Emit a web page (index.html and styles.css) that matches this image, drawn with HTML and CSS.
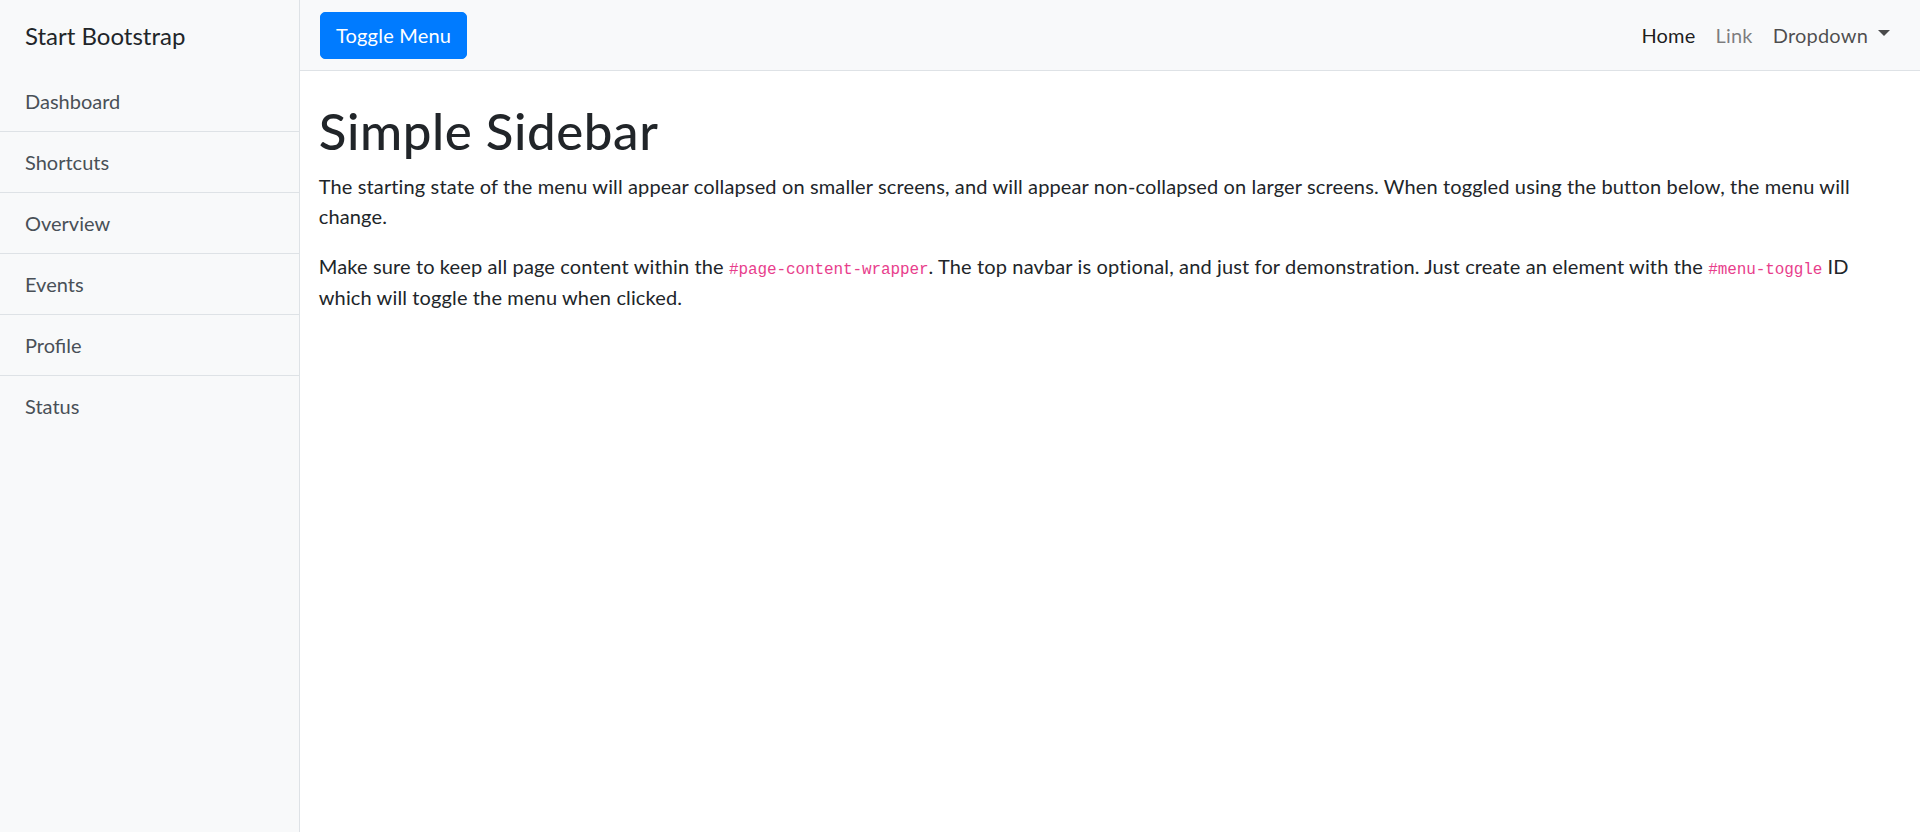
FILE: index.html
```html
<!DOCTYPE html>
<html lang="en">
<head>
<meta charset="utf-8">
<title>Simple Sidebar</title>
<link rel="stylesheet" href="styles.css">
</head>
<body>
<div class="wrapper">
  <aside class="sidebar">
    <div class="sidebar-heading">Start Bootstrap</div>
    <nav class="list-group">
      <a href="#" class="list-item">Dashboard</a>
      <a href="#" class="list-item">Shortcuts</a>
      <a href="#" class="list-item">Overview</a>
      <a href="#" class="list-item">Events</a>
      <a href="#" class="list-item">Profile</a>
      <a href="#" class="list-item last">Status</a>
    </nav>
  </aside>
  <div class="page">
    <header class="navbar">
      <button class="btn-toggle" type="button">Toggle Menu</button>
      <ul class="nav">
        <li><a href="#" class="nav-link active">Home</a></li>
        <li><a href="#" class="nav-link muted">Link</a></li>
        <li><a href="#" class="nav-link dropdown">Dropdown<span class="caret"></span></a></li>
      </ul>
    </header>
    <main class="content">
      <h1 class="title">Simple Sidebar</h1>
      <p class="para">The starting state of the menu will appear collapsed on smaller screens, and will appear non-collapsed on larger screens. When toggled using the button below, the menu will change.</p>
      <p class="para">Make sure to keep all page content within the <code class="code">#page-content-wrapper</code>. The top navbar is optional, and just for demonstration. Just create an element with the <code class="code">#menu-toggle</code> ID which will toggle the menu when clicked.</p>
    </main>
  </div>
</div>
</body>
</html>
```
FILE: styles.css
```css
* { box-sizing: border-box; }
html, body { margin: 0; padding: 0; }
body {
  font-family: "Lato", "Open Sans", sans-serif;
  font-size: 20px;
  line-height: 1.5;
  color: #212529;
  background: #fff;
}
.wrapper {
  display: flex;
  min-height: 832px;
}
.sidebar {
  width: 300px;
  flex-shrink: 0;
  background: #f8f9fa;
  border-right: 1px solid #dee2e6;
}
.sidebar-heading {
  padding: 17.5px 25px;
  font-size: 24px;
  line-height: 36px;
  color: #212529;
}
.list-group {
  display: flex;
  flex-direction: column;
}
.list-item {
  display: block;
  padding: 15px 25px;
  line-height: 30px;
  color: #495057;
  text-decoration: none;
  border-bottom: 1px solid #dee2e6;
}
.list-item.last { border-bottom: 0; }
.page {
  flex: 1;
  min-width: 0;
}
.navbar {
  display: flex;
  align-items: center;
  justify-content: space-between;
  padding: 10px 20px;
  background: #f8f9fa;
  border-bottom: 1px solid #dee2e6;
  height: 71px;
}
.btn-toggle {
  font-family: inherit;
  font-size: 20px;
  line-height: 30px;
  padding: 7.5px 15px;
  color: #fff;
  background: #007bff;
  border: 1px solid #007bff;
  border-radius: 5px;
  letter-spacing: 0.2px;
}
.nav {
  display: flex;
  list-style: none;
  margin: 0;
  padding: 0;
}
.nav-link {
  display: block;
  padding: 10px 10px;
  line-height: 30px;
  text-decoration: none;
  color: rgba(0,0,0,.5);
  letter-spacing: 0.2px;
}
.nav-link.active { color: rgba(0,0,0,.9); }
.nav-link.dropdown { color: rgba(0,0,0,.7); display: flex; align-items: center; }
.caret {
  display: inline-block;
  margin-left: 10px;
  margin-top: -4px;
  width: 0;
  height: 0;
  border-top: 6px solid currentColor;
  border-left: 6px solid transparent;
  border-right: 6px solid transparent;
}
.content {
  padding: 0 18.75px;
}
.title {
  margin: 30px 0 10px;
  font-size: 51px;
  font-weight: 500;
  line-height: 60px;
  letter-spacing: 0.6px;
}
.para {
  margin: 0 0 20px;
  letter-spacing: 0.13px;
}
.code {
  font-family: "Liberation Mono", "DejaVu Sans Mono", monospace;
  font-size: 16px;
  letter-spacing: -0.1px;
  color: #e83e8c;
}
```
